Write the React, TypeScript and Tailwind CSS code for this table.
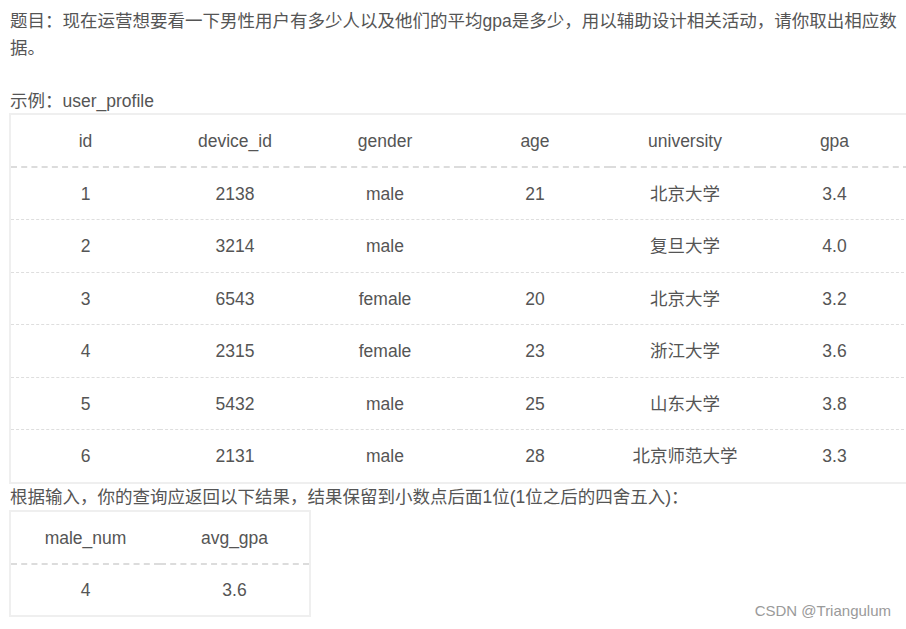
const rows = [
  ['1', '2138', 'male', '21', '北京大学', '3.4'],
  ['2', '3214', 'male', '', '复旦大学', '4.0'],
  ['3', '6543', 'female', '20', '北京大学', '3.2'],
  ['4', '2315', 'female', '23', '浙江大学', '3.6'],
  ['5', '5432', 'male', '25', '山东大学', '3.8'],
  ['6', '2131', 'male', '28', '北京师范大学', '3.3'],
]

const cols = ['id', 'device_id', 'gender', 'age', 'university', 'gpa']

function DataTable({ head, body }: { head: string[]; body: string[][] }) {
  return (
    <table className="border-collapse border-2 border-[#efefef] text-center">
      <thead>
        <tr className="h-[53px] border-b-2 border-dashed border-[#dcdcdc]">
          {head.map((h) => (
            <th key={h} className="w-[150px] p-0 pt-[2px] font-normal">
              {h}
            </th>
          ))}
        </tr>
      </thead>
      <tbody>
        {body.map((r, i) => (
          <tr
            key={i}
            className={
              i < body.length - 1
                ? 'h-[52.6px] border-b border-dashed border-[#dedede]'
                : 'h-[52.6px]'
            }
          >
            {r.map((c, j) => (
              <td key={j} className="w-[150px] p-0 pt-px">
                {c}
              </td>
            ))}
          </tr>
        ))}
      </tbody>
    </table>
  )
}

export default function App() {
  return (
    <div
      className="relative w-[906px] h-[629px] overflow-hidden bg-white px-[9px] pt-[8px] text-[17.5px] text-[#555]"
      style={{ fontFamily: '"Liberation Sans", "Noto Sans CJK SC", sans-serif' }}
    >
      <p className="leading-[27px] pl-px">
        题目：现在运营想要看一下男性用户有多少人以及他们的平均gpa是多少，用以辅助设计相关活动，请你取出相应数据。
      </p>
      <p className="mt-[28px] leading-[23px] pl-px">示例：user_profile</p>
      <div className="w-[910px]">
        <DataTable head={cols} body={rows} />
      </div>
      <p className="leading-[26px] pl-px">
        根据输入，你的查询应返回以下结果，结果保留到小数点后面1位(1位之后的四舍五入)：
      </p>
      <DataTable head={['male_num', 'avg_gpa']} body={[['4', '3.6']]} />

      {/* watermark */}
      <div className="absolute right-[15px] bottom-[7px] text-[15px] text-[#9a9a9a]">
        CSDN @Triangulum
      </div>
    </div>
  )
}
